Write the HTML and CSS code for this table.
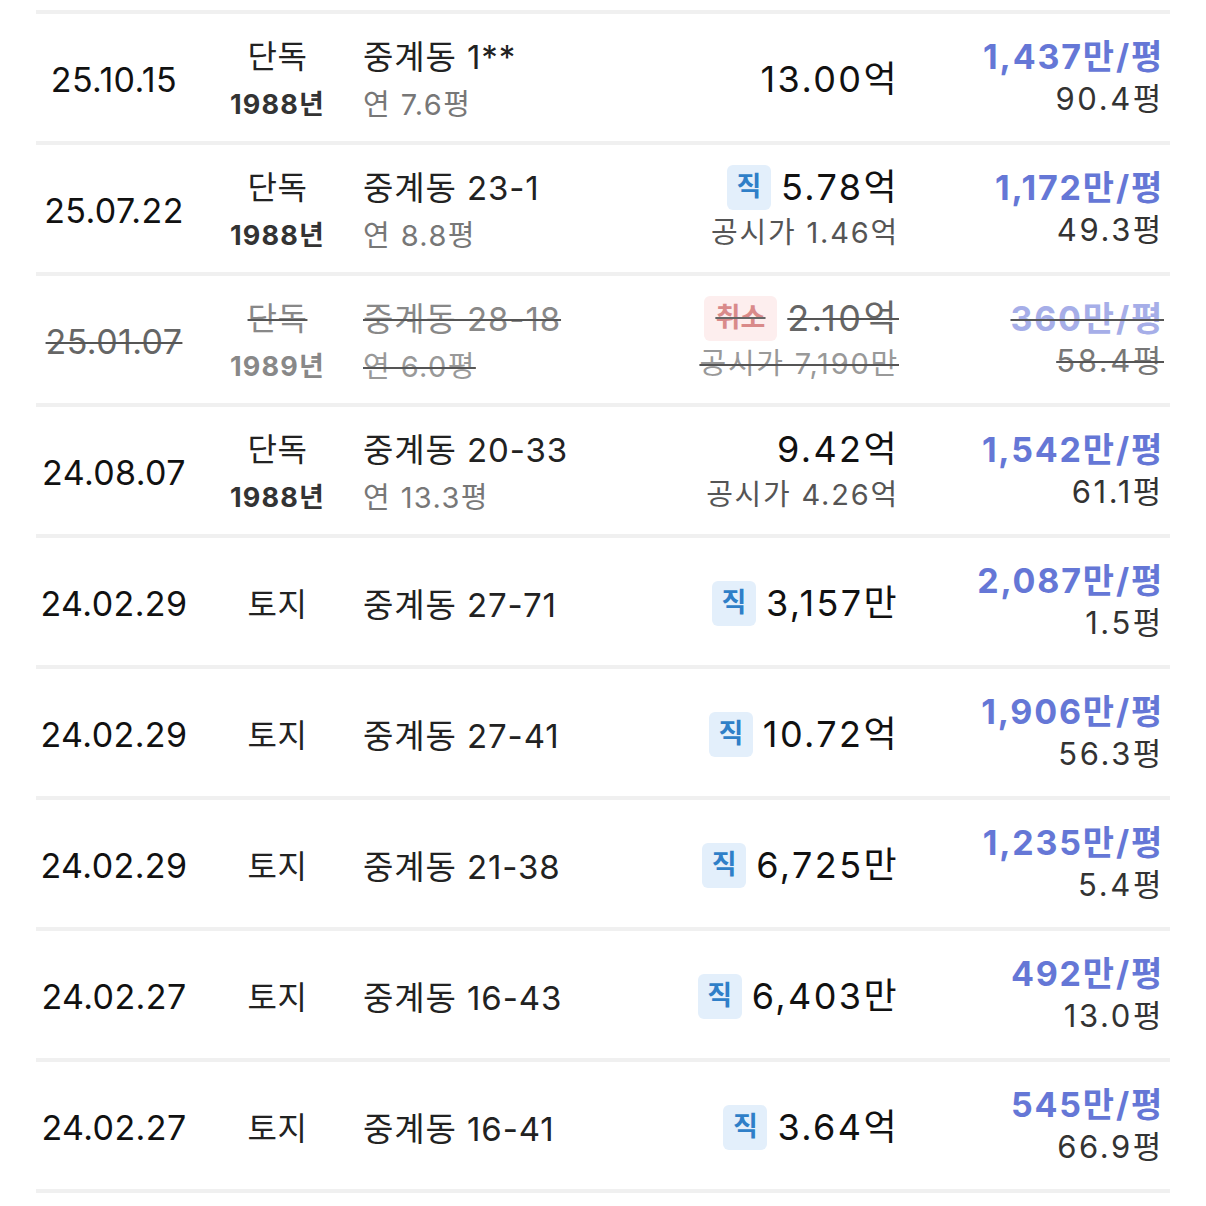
FILE: index.html
```html
<!DOCTYPE html>
<html lang="ko">
<head>
<meta charset="utf-8">
<link rel="stylesheet" href="styles.css">
</head>
<body>
<div class="list">
  <div class="row">
    <div class="c-date">25.10.15</div>
    <div class="c-type"><div class="t1">단독</div><div class="t2">1988년</div></div>
    <div class="c-addr"><div class="a1">중계동 1**</div><div class="a2">연 7.6평</div></div>
    <div class="c-price"><div class="p1">13.00억</div></div>
    <div class="c-unit"><div class="u1">1,437만/평</div><div class="u2">90.4평</div></div>
  </div>
  <div class="row">
    <div class="c-date">25.07.22</div>
    <div class="c-type"><div class="t1">단독</div><div class="t2">1988년</div></div>
    <div class="c-addr"><div class="a1">중계동 23-1</div><div class="a2">연 8.8평</div></div>
    <div class="c-price"><div class="p1"><span class="badge">직</span>5.78억</div><div class="p2">공시가 1.46억</div></div>
    <div class="c-unit"><div class="u1">1,172만/평</div><div class="u2">49.3평</div></div>
  </div>
  <div class="row cancelled">
    <div class="c-date"><s>25.01.07</s></div>
    <div class="c-type"><div class="t1"><s>단독</s></div><div class="t2">1989년</div></div>
    <div class="c-addr"><div class="a1"><s>중계동 28-18</s></div><div class="a2"><s>연 6.0평</s></div></div>
    <div class="c-price"><div class="p1"><s><span class="badge cancel">취소</span>2.10억</s></div><div class="p2"><s>공시가 7,190만</s></div></div>
    <div class="c-unit"><div class="u1"><s>360만/평</s></div><div class="u2"><s>58.4평</s></div></div>
  </div>
  <div class="row">
    <div class="c-date">24.08.07</div>
    <div class="c-type"><div class="t1">단독</div><div class="t2">1988년</div></div>
    <div class="c-addr"><div class="a1">중계동 20-33</div><div class="a2">연 13.3평</div></div>
    <div class="c-price"><div class="p1">9.42억</div><div class="p2">공시가 4.26억</div></div>
    <div class="c-unit"><div class="u1">1,542만/평</div><div class="u2">61.1평</div></div>
  </div>
  <div class="row">
    <div class="c-date">24.02.29</div>
    <div class="c-type"><div class="t1">토지</div></div>
    <div class="c-addr"><div class="a1">중계동 27-71</div></div>
    <div class="c-price"><div class="p1"><span class="badge">직</span>3,157만</div></div>
    <div class="c-unit"><div class="u1">2,087만/평</div><div class="u2">1.5평</div></div>
  </div>
  <div class="row">
    <div class="c-date">24.02.29</div>
    <div class="c-type"><div class="t1">토지</div></div>
    <div class="c-addr"><div class="a1">중계동 27-41</div></div>
    <div class="c-price"><div class="p1"><span class="badge">직</span>10.72억</div></div>
    <div class="c-unit"><div class="u1">1,906만/평</div><div class="u2">56.3평</div></div>
  </div>
  <div class="row">
    <div class="c-date">24.02.29</div>
    <div class="c-type"><div class="t1">토지</div></div>
    <div class="c-addr"><div class="a1">중계동 21-38</div></div>
    <div class="c-price"><div class="p1"><span class="badge">직</span>6,725만</div></div>
    <div class="c-unit"><div class="u1">1,235만/평</div><div class="u2">5.4평</div></div>
  </div>
  <div class="row">
    <div class="c-date">24.02.27</div>
    <div class="c-type"><div class="t1">토지</div></div>
    <div class="c-addr"><div class="a1">중계동 16-43</div></div>
    <div class="c-price"><div class="p1"><span class="badge">직</span>6,403만</div></div>
    <div class="c-unit"><div class="u1">492만/평</div><div class="u2">13.0평</div></div>
  </div>
  <div class="row">
    <div class="c-date">24.02.27</div>
    <div class="c-type"><div class="t1">토지</div></div>
    <div class="c-addr"><div class="a1">중계동 16-41</div></div>
    <div class="c-price"><div class="p1"><span class="badge">직</span>3.64억</div></div>
    <div class="c-unit"><div class="u1">545만/평</div><div class="u2">66.9평</div></div>
  </div>
</div>
</body>
</html>
```

FILE: styles.css
```css
html, body {
  margin: 0;
  padding: 0;
  background: #ffffff;
}
body {
  font-family: "Inter", "Noto Sans CJK KR", sans-serif;
  color: #111111;
}
.list {
  margin: 10px 36px 0 36px;
  border-top: 4px solid #f0f0f0;
}
.row {
  display: grid;
  grid-template-columns: 156px 171px 1fr auto 265px;
  align-items: center;
  height: 127px;
  border-bottom: 4px solid #f0f0f0;
  padding-right: 8px;
}
.c-date {
  text-align: center;
  font-size: 34px;
  letter-spacing: 0.4px;
  color: #111;
  padding-top: 4px;
}
.c-type {
  text-align: center;
  padding-top: 7px;
}
.t1 {
  font-size: 32px;
  line-height: 48px;
  color: #222;
  letter-spacing: 0.5px;
}
.t2 {
  font-size: 27px;
  line-height: 48px;
  font-weight: 700;
  color: #333;
  letter-spacing: 1.2px;
}
.c-addr {
  text-align: left;
  padding-top: 7px;
}
.a1 {
  font-size: 33px;
  line-height: 48px;
  color: #222;
  letter-spacing: 0.9px;
}
.a2 {
  font-size: 29px;
  line-height: 48px;
  color: #777;
  letter-spacing: 1.4px;
}
.c-price {
  text-align: right;
  padding-top: 3px;
  margin-right: -2px;
}
.p1 {
  font-size: 36px;
  line-height: 46px;
  color: #111;
  letter-spacing: 2.4px;
  display: flex;
  justify-content: flex-end;
  align-items: center;
}
.p2 {
  font-size: 29px;
  line-height: 46px;
  color: #555;
  letter-spacing: 1.8px;
}
.badge {
  display: inline-flex;
  align-items: center;
  justify-content: center;
  height: 45px;
  min-width: 44px;
  padding: 0 6px;
  box-sizing: border-box;
  border-radius: 6px;
  background: #e3effb;
  color: #2f7fc8;
  font-size: 27px;
  font-weight: 700;
  letter-spacing: 0;
  margin-right: 10px;
}
.c-unit {
  text-align: right;
  margin-right: -2px;
}
.u1 {
  font-size: 34px;
  line-height: 42px;
  font-weight: 700;
  color: #6577d6;
  letter-spacing: 1.8px;
}
.u2 {
  font-size: 31px;
  line-height: 42px;
  color: #333;
  letter-spacing: 2.6px;
}
s {
  text-decoration-color: #555;
  text-decoration-thickness: 2px;
}
.cancelled .c-date { color: #666; }
.cancelled .t1, .cancelled .a1 { color: #888; }
.cancelled .t2 { color: #888; }
.cancelled .a2 { color: #999; }
.cancelled .p1 { color: #666; }
.cancelled .p2 { color: #999; }
.cancelled .u1 { color: #a6aee8; }
.cancelled .u2 { color: #777; }
.cancelled .p1 s {
  display: inline-flex;
  align-items: center;
}
.badge.cancel {
  background: #fdeeee;
  color: #d98a8a;
  padding: 0 12px;
  text-decoration: line-through;
  text-decoration-color: #666;
}
```
